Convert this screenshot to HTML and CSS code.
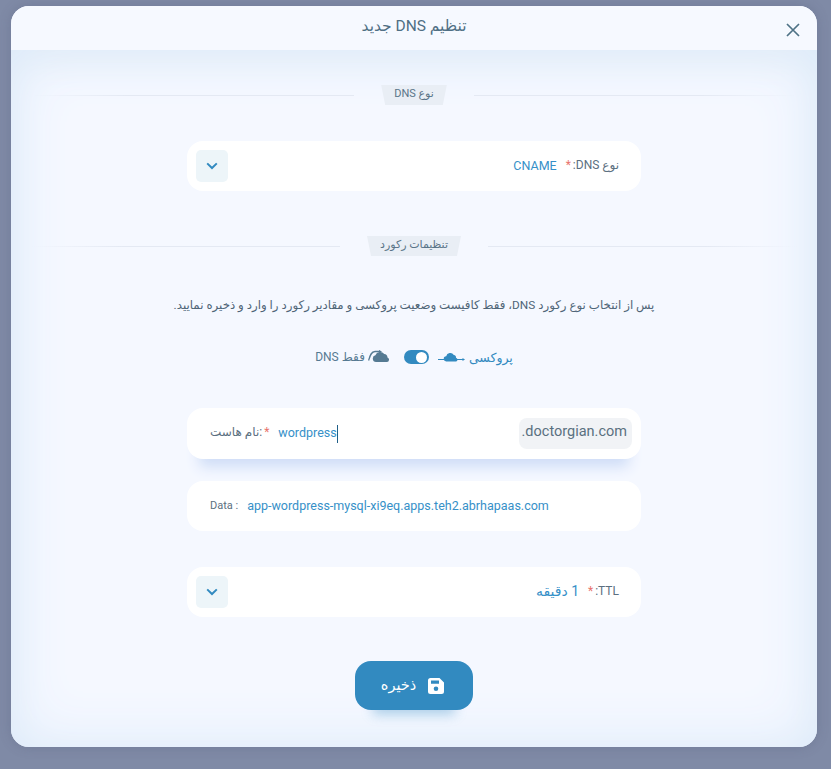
FILE: index.html
```html
<!DOCTYPE html>
<html lang="fa" dir="rtl">
<head>
    <meta charset="UTF-8">
    <meta name="viewport" content="width=device-width, initial-scale=1.0">
    <title>تنظیم DNS جدید</title>
    <link rel="stylesheet" href="styles.css">
</head>
<body>
    <div class="modal">
        <!-- Header -->
        <div class="modal-header">
            <h1>تنظیم DNS جدید</h1>
            <button class="close-btn" aria-label="بستن">
                <svg width="14" height="14" viewBox="0 0 14 14"><path d="M1 1l12 12M13 1L1 13" fill="none" stroke="#4f7286" stroke-width="1.7"/></svg>
            </button>
        </div>

        <div class="modal-body">
            <!-- DNS type -->
            <div class="section-title title-type">
                <span class="line"></span>
                <span class="tag">نوع DNS</span>
                <span class="line"></span>
            </div>

            <div class="field field-select">
                <span class="label">نوع DNS<span class="colon">:</span><span class="req">*</span></span>
                <span class="value">CNAME</span>
                <button class="select-btn" aria-label="باز کردن">
                    <svg width="12" height="8" viewBox="0 0 12 8"><path d="M1.2 1.4L6 6l4.8-4.6" fill="none" stroke="#328ac0" stroke-width="2"/></svg>
                </button>
            </div>

            <!-- Record settings -->
            <div class="section-title title-record">
                <span class="line"></span>
                <span class="tag">تنظیمات رکورد</span>
                <span class="line"></span>
            </div>

            <p class="hint">پس از انتخاب نوع رکورد DNS، فقط کافیست وضعیت پروکسی و مقادیر رکورد را وارد و ذخیره نمایید.</p>

            <div class="proxy-row">
                <span class="proxy-on">پروکسی</span>
                <svg class="icon-proxy" width="27" height="12" viewBox="0 0 27 12">
                    <path d="M8.500 10.500a2.600 2.600 0 0 1-.3-5.200 4.200 4.200 0 0 1 7.600-1.400 2.600 2.600 0 0 1 2.200 2.900 1.900 1.900 0 0 1 0 3.700z" fill="#328ac0"/>
                    <path d="M0 8.500h6M19 8.500h6" stroke="#328ac0" stroke-width="1"/>
                    <path d="M24.500 7l2.500 1.500-2.500 1.500z" fill="#328ac0"/>
                </svg>
                <span class="toggle"><span class="knob"></span></span>
                <svg class="icon-dns" width="21" height="15" viewBox="0 0 21 15">
                    <path d="M8 12a3.400 3.400 0 0 1-.6-6.700 5 5 0 0 1 8.800-1.200 3.600 3.600 0 0 1 3.300 3.300 2.400 2.400 0 0 1-.5 4.600z" fill="#557a92"/>
                    <path d="M.6 10.500C2 6 3 1.500 7 1.500h5" fill="none" stroke="#557a92" stroke-width="1.300"/>
                    <path d="M11 0l3 1.500-3 1.500z" fill="#557a92"/>
                </svg>
                <span class="proxy-off">فقط DNS</span>
            </div>

            <!-- Record values -->
            <div class="field field-host">
                <span class="domain" dir="ltr">.doctorgian.com</span>
                <span class="host-input" dir="ltr"><span class="value">wordpress</span><span class="caret"></span></span>
                <span class="label"><span class="req">*</span><span class="colon">:</span>نام هاست</span>
            </div>

            <div class="field field-data" dir="ltr">
                <span class="label">Data :</span>
                <span class="value">app-wordpress-mysql-xi9eq.apps.teh2.abrhapaas.com</span>
            </div>

            <div class="field field-select field-ttl">
                <span class="label">TTL<span class="colon">:</span><span class="req">*</span></span>
                <span class="value">1 دقیقه</span>
                <button class="select-btn" aria-label="باز کردن">
                    <svg width="12" height="8" viewBox="0 0 12 8"><path d="M1.2 1.4L6 6l4.8-4.6" fill="none" stroke="#328ac0" stroke-width="2"/></svg>
                </button>
            </div>

            <button class="save-btn">
                <svg width="16" height="16" viewBox="0 0 16 16"><path fill-rule="evenodd" d="M2.500 0h9L16 4.500v9a2.500 2.500 0 0 1-2.500 2.500h-11A2.500 2.500 0 0 1 0 13.500v-11A2.500 2.500 0 0 1 2.500 0zM3 2.500v3.200h8V2.500zM8 8.500a2.300 2.300 0 1 0 0 4.600 2.300 2.300 0 0 0 0-4.600z" fill="#fff"/></svg>
                <span>ذخیره</span>
            </button>
        </div>
    </div>
</body>
</html>
```

FILE: styles.css
```css
/* Global Styles */
body {
    font-family: Roboto, "DejaVu Sans", sans-serif;
    margin: 0;
    padding: 6px 14px 22px 11px;
    background-color: #7f8aa6;
    overflow: hidden;
}

button {
    font-family: inherit;
    border: none;
    cursor: pointer;
}

/* Modal */
.modal {
    height: 741px;
    border-radius: 18px;
    overflow: hidden;
    background-color: #f5f8ff;
    display: flex;
    flex-direction: column;
    box-shadow: 0 0 12px rgba(70, 80, 110, 0.25);
}

.modal-header {
    height: 44px;
    flex: none;
    background-color: #f6f9ff;
    display: flex;
    align-items: center;
    justify-content: center;
    position: relative;
}

.modal-header h1 {
    margin: 0 0 5px;
    font-size: 15.500px;
    font-weight: 400;
    color: #4f6f84;
}

.close-btn {
    position: absolute;
    left: 775px;
    top: 17px;
    padding: 0;
    background: none;
    display: flex;
}

.modal-body {
    flex: 1;
    display: flex;
    flex-direction: column;
    align-items: center;
    box-shadow: inset 0 0 60px #dceafa, inset 0 10px 34px #e9f0f7;
}

/* Section titles */
.section-title {
    align-self: stretch;
    display: flex;
    align-items: center;
    height: 20px;
    padding: 0 19px;
    gap: 27px;
}

.title-type {
    margin-top: 35px;
}

.title-record {
    margin-top: 45px;
}

.section-title .line {
    flex: 1;
    height: 1px;
    background: linear-gradient(to right, transparent, #e4e9f3 30%);
}

.section-title .line:first-child {
    background: linear-gradient(to left, transparent, #e4e9f3 30%);
}

.section-title .tag {
    padding: 0 13px;
    height: 20px;
    line-height: 18px;
    font-size: 11px;
    color: #5a7488;
    background-color: #e9eef5;
    clip-path: polygon(0 0, 100% 0, calc(100% - 4px) 100%, 4px 100%);
}

/* Fields */
.field {
    width: 454px;
    height: 50px;
    box-sizing: border-box;
    border-radius: 16px;
    background-color: #fff;
    display: flex;
    align-items: center;
    font-size: 12.500px;
}

.field .label {
    font-size: 12px;
    color: #5b6f80;
    margin-bottom: 2px;
}

.field .value {
    color: #3690c8;
    margin-bottom: 2px;
}

.req {
    color: #e8736c;
    margin: 0 2px;
}

.field-select {
    margin-top: 36px;
    padding: 0 22px 0 9px;
    justify-content: flex-start;
}

.field-select .value {
    margin-right: 7px;
}

.select-btn {
    margin-right: auto;
    width: 32px;
    height: 32px;
    border-radius: 5px;
    background-color: #edf5f9;
    display: flex;
    align-items: center;
    justify-content: center;
    padding: 0;
}

.hint {
    margin: 39px 0 0;
    font-size: 11.800px;
    line-height: 20px;
    color: #4f6577;
}

.proxy-row {
    margin-top: 30px;
    height: 24px;
    display: flex;
    align-items: center;
    font-size: 12.500px;
}

.proxy-on {
    color: #328ac0;
}

.proxy-off {
    color: #557a92;
    font-size: 12px;
}

.icon-proxy {
    margin: 0 4px 0 9px;
}

.icon-dns {
    margin: 0 15px 0 3px;
}

.toggle {
    width: 25px;
    height: 14px;
    border-radius: 7px;
    background-color: #328ac0;
    display: flex;
    align-items: center;
    justify-content: flex-start;
    padding: 0 1.500px;
    box-sizing: border-box;
}

.knob {
    width: 11px;
    height: 11px;
    border-radius: 50%;
    background-color: #fff;
}

.field-host {
    height: 51px;
    margin-top: 39px;
    padding: 0 9px 0 23px;
    box-shadow: 0 20px 14px -12px #cfddf7;
}

.domain {
    padding: 0 5px 0 3px;
    height: 31px;
    line-height: 28px;
    font-size: 14.500px;
    color: #5a7080;
    background-color: #f1f3f6;
    border-radius: 8px;
}

.host-input {
    margin-right: auto;
    display: flex;
    align-items: center;
    font-size: 12.500px;
}

.field-host .value {
    margin-bottom: 3px;
}

.caret {
    width: 1px;
    height: 18px;
    background-color: #1f5f88;
}

.field-host .label {
    margin: 0 7px 3px 0;
}

.field-data {
    margin-top: 22px;
    padding: 0 23px;
    gap: 9px;
}

.field-data .label {
    font-size: 11px;
}

.field-ttl {
    margin-top: 36px;
}

.field-ttl .value {
    font-size: 14px;
}

/* Save button */
.save-btn {
    margin-top: 44px;
    width: 118px;
    height: 49px;
    padding: 0 3px 0 0;
    border-radius: 16px;
    background-color: #328ac0;
    color: #fff;
    font-size: 14.500px;
    display: flex;
    align-items: center;
    justify-content: center;
    gap: 12px;
    box-shadow: 0 22px 12px -18px rgba(50, 138, 192, 0.4);
}
```
